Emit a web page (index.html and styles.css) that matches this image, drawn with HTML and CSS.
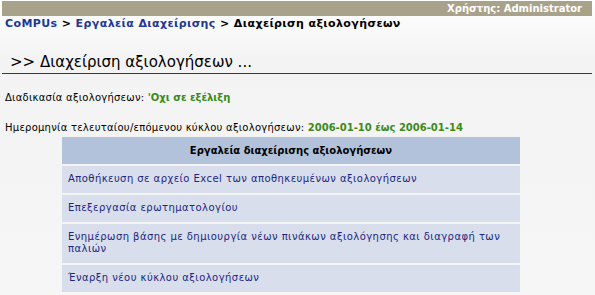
FILE: index.html
```html
<!DOCTYPE html>
<html>
<head>
 <title>CoMPUs - Διαχείριση αξιολογήσεων</title>
 <link rel="stylesheet" href="styles.css">
</head>
<body>
 <!-- top bar with the logged in user -->
 <div class="user-bar">Χρήστης: Administrator</div>

 <!-- breadcrumbs -->
 <div class="breadcrumbs">
  <a href="#">CoMPUs</a> &gt; <a href="#">Εργαλεία Διαχείρισης</a> &gt; <span>Διαχείριση αξιολογήσεων</span>
 </div>

 <!-- page title -->
 <h2 class="page-title">&gt;&gt; Διαχείριση αξιολογήσεων ...</h2>

 <!-- current status -->
 <p class="info-line">Διαδικασία αξιολογήσεων: <span class="info-value">'Οχι σε εξέλιξη</span></p>
 <p class="info-line">Ημερομηνία τελευταίου/επόμενου κύκλου αξιολογήσεων: <span class="info-value">2006-01-10 έως 2006-01-14</span></p>

 <!-- tools table -->
 <table class="tools-table">
  <tr><th>Εργαλεία διαχείρισης αξιολογήσεων</th></tr>
  <tr><td><a href="#">Αποθήκευση σε αρχείο Excel των αποθηκευμένων αξιολογήσεων</a></td></tr>
  <tr><td><a href="#">Επεξεργασία ερωτηματολογίου</a></td></tr>
  <tr><td><a href="#">Ενημέρωση βάσης με δημιουργία νέων πινάκων αξιολόγησης και διαγραφή των παλιών</a></td></tr>
  <tr><td><a href="#">Έναρξη νέου κύκλου αξιολογήσεων</a></td></tr>
 </table>
</body>
</html>
```

FILE: styles.css
```css
/* page base */
body {
 margin: 0;
 font-family: "DejaVu Sans", Verdana, sans-serif;
 font-size: 11px;
 color: #000;
 background: linear-gradient(#ffffff 0, #f3f3f3 60px, #f6f6f6 100%);
 height: 295px;
 overflow: hidden;
}

/* user bar at the top */
.user-bar {
 margin: 1px 3px 0 2px;
 height: 15px;
 line-height: 15px;
 background-color: #a9a28b;
 color: #fff;
 font-size: 10px;
 font-weight: bold;
 text-align: right;
 padding-right: 10px;
}

/* breadcrumbs */
.breadcrumbs {
 padding: 1px 5px 0;
 height: 14px;
 line-height: 14px;
 font-weight: bold;
 letter-spacing: 0.4px;
}
.breadcrumbs a {
 color: #1c3897;
 text-decoration: none;
}

/* page title */
.page-title {
 margin: 22px 3px 0 2px;
 padding: 0 0 1px 8px;
 font-size: 15px;
 font-weight: normal;
 line-height: 19px;
 border-bottom: 1px solid #7b1a33;
}

/* info lines */
.info-line {
 margin: 17px 0 0 5px;
 font-size: 10px;
 line-height: 13px;
 letter-spacing: 0.25px;
}
.info-value {
 color: #3c8a1c;
 font-weight: bold;
 letter-spacing: 0;
}

/* tools table */
.tools-table {
 margin: 1px 0 0 60px;
 width: 462px;
 border-spacing: 2px;
}
.tools-table th {
 background-color: #b2c2da;
 height: 27px;
 padding: 0;
 font-size: 10px;
}
.tools-table td {
 background-color: #d8deec;
 padding: 7px 6px 8px;
 line-height: 12px;
 font-size: 10px;
 letter-spacing: 0.45px;
}
.tools-table a {
 color: #1b2682;
 text-decoration: none;
}
```
